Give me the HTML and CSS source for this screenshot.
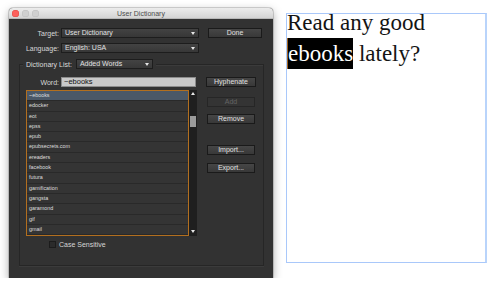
FILE: index.html
```html
<!DOCTYPE html>
<html lang="en">
<head>
    <meta charset="UTF-8">
    <meta name="viewport" content="width=device-width, initial-scale=1.0">
    <title>User Dictionary</title>
    <link rel="stylesheet" href="styles.css">
</head>
<body>
    <div class="window">
        <div class="titlebar">
            <div class="lights">
                <span class="light red"></span>
                <span class="light"></span>
                <span class="light"></span>
            </div>
            <div class="title">User Dictionary</div>
        </div>
        <div class="win-body">
            <div class="row">
                <label class="lbl">Target:</label>
                <div class="dropdown wide">User Dictionary<span class="arrow"></span></div>
                <button class="btn done">Done</button>
            </div>
            <div class="row lang-row">
                <label class="lbl">Language:</label>
                <div class="dropdown wide">English: USA<span class="arrow"></span></div>
            </div>

            <div class="group">
                <div class="legend">
                    <span class="legend-text">Dictionary List:</span>
                    <div class="dropdown short">Added Words<span class="arrow"></span></div>
                </div>

                <div class="row word-row">
                    <label class="lbl word-lbl">Word:</label>
                    <div class="word-input">~ebooks</div>
                    <button class="btn hyph">Hyphenate</button>
                </div>

                <div class="main">
                    <div class="list-wrap">
                        <ul class="word-list" id="wordList"></ul>
                        <div class="scrollbar">
                            <span class="up"></span>
                            <span class="thumb"></span>
                            <span class="down"></span>
                        </div>
                    </div>
                    <div class="side-buttons">
                        <button class="btn add" disabled>Add</button>
                        <button class="btn remove">Remove</button>
                        <button class="btn import">Import...</button>
                        <button class="btn export">Export...</button>
                    </div>
                </div>

                <div class="check-row">
                    <span class="checkbox"></span>
                    <span class="check-text">Case Sensitive</span>
                </div>
            </div>
        </div>
    </div>

    <div class="doc">
        <p class="doc-text">Read any good <span class="sel">ebooks</span> lately?</p>
    </div>

    <script>
        const words = ['~ebooks', 'edocker', 'eot', 'epss', 'epub', 'epubsecrets.com', 'ereaders',
            'facebook', 'futura', 'gamification', 'gangsta', 'garamond', 'gif', 'gmail'];
        const list = document.getElementById('wordList');
        words.forEach((w, i) => {
            const li = document.createElement('li');
            li.textContent = w;
            if (i === 0) li.classList.add('selected');
            list.appendChild(li);
        });
    </script>
</body>
</html>
```

FILE: styles.css
```css
body {
    margin: 0;
    padding: 8px 0 0 9px;
    display: flex;
    align-items: flex-start;
    background-color: #ffffff;
    font-family: "Liberation Sans", Arial, sans-serif;
}
.window {
    width: 264px;
    height: 270px;
    background-color: #323232;
    border-radius: 4px 4px 0 0;
    box-shadow: 0 3px 10px rgba(0, 0, 0, 0.35), 0 0 0 1px rgba(0, 0, 0, 0.15);
    display: flex;
    flex-direction: column;
}
.titlebar {
    height: 11px;
    flex: none;
    background: linear-gradient(#ececec, #d4d4d4);
    border-radius: 4px 4px 0 0;
    border-bottom: 1px solid #b8b8b8;
    box-sizing: border-box;
    display: flex;
    align-items: center;
}
.lights {
    display: flex;
    gap: 3px;
    padding-left: 3px;
}
.light {
    width: 7px;
    height: 7px;
    border-radius: 50%;
    background-color: #d0d0d0;
    box-shadow: inset 0 0 0 0.5px #bdbdbd;
}
.light.red {
    background-color: #fc605c;
    box-shadow: inset 0 0 0 0.5px #de4a44;
}
.title {
    flex: 1;
    text-align: center;
    font-size: 7px;
    color: #4c4c4c;
    margin-left: -30px;
}
.win-body {
    padding-top: 9px;
    color: #dcdcdc;
    font-size: 7px;
}
.row {
    display: flex;
    align-items: center;
    height: 10px;
}
.lang-row {
    margin-top: 5px;
}
.lbl {
    width: 50px;
    text-align: right;
    margin-right: 2px;
    color: #d8d8d8;
}
.dropdown {
    height: 10px;
    box-sizing: border-box;
    background: linear-gradient(#434343, #373737);
    border: 1px solid #1d1d1d;
    padding-left: 3px;
    line-height: 8px;
    color: #e2e2e2;
    position: relative;
    white-space: nowrap;
}
.dropdown.wide {
    width: 138px;
}
.dropdown.short {
    width: 77px;
}
.arrow {
    position: absolute;
    right: 3px;
    top: 3px;
    border-left: 2px solid transparent;
    border-right: 2px solid transparent;
    border-top: 3px solid #e6e6e6;
}
.btn {
    height: 10px;
    padding: 0;
    box-sizing: border-box;
    background: linear-gradient(#464646, #383838);
    border: 1px solid #1a1a1a;
    color: #e0e0e0;
    font-family: "Liberation Sans", Arial, sans-serif;
    font-size: 7px;
    line-height: 8px;
    text-align: center;
}
.btn:disabled {
    background: #343434;
    border-color: #262626;
    color: #646464;
}
.done {
    width: 54px;
    margin-left: 9px;
}
.group {
    margin: 11px 0 0 10px;
    width: 245px;
    height: 202px;
    box-sizing: border-box;
    border: 1px solid #262626;
    box-shadow: 0 1px 0 #3b3b3b, inset 0 1px 0 #3b3b3b;
}
.legend {
    display: flex;
    align-items: center;
    width: fit-content;
    margin: -6px 0 0 3px;
    padding: 0 3px;
    background-color: #323232;
    height: 10px;
}
.legend-text {
    margin-right: 4px;
}
.word-row {
    margin-top: 8px;
}
.word-lbl {
    width: 39px;
}
.word-input {
    width: 135px;
    height: 10px;
    box-sizing: border-box;
    background-color: #c9c9c9;
    border: 1px solid #8c8c8c;
    color: #111;
    font-size: 7.5px;
    line-height: 8px;
    padding-left: 2px;
}
.hyph {
    width: 50px;
    margin-left: 10px;
}
.main {
    display: flex;
    margin-top: 3px;
}
.list-wrap {
    display: flex;
    margin-left: 6px;
    height: 146px;
}
.word-list {
    list-style: none;
    margin: 0;
    padding: 0;
    width: 163px;
    box-sizing: border-box;
    border: 1px solid #b26f1f;
    background-color: #343434;
    overflow: hidden;
}
.word-list li {
    height: 10.3px;
    box-sizing: border-box;
    border-bottom: 1px solid #292929;
    font-size: 5.4px;
    line-height: 9px;
    padding-left: 2px;
    color: #dedede;
}
.word-list li.selected {
    background-color: #4b5867;
}
.scrollbar {
    width: 8px;
    background-color: #1f1f1f;
    display: flex;
    flex-direction: column;
    align-items: center;
}
.up {
    margin-top: 2px;
    border-left: 2px solid transparent;
    border-right: 2px solid transparent;
    border-bottom: 3px solid #e8e8e8;
}
.thumb {
    margin-top: 21px;
    width: 6px;
    height: 11px;
    background-color: #9b9b9b;
}
.down {
    margin-top: auto;
    margin-bottom: 3px;
    border-left: 2px solid transparent;
    border-right: 2px solid transparent;
    border-top: 3px solid #e8e8e8;
}
.side-buttons {
    display: flex;
    flex-direction: column;
    margin-left: 10px;
}
.side-buttons .btn {
    width: 48px;
}
.add {
    margin-top: 7px;
}
.remove {
    margin-top: 7px;
}
.import {
    margin-top: 21px;
}
.export {
    margin-top: 8px;
}
.check-row {
    display: flex;
    align-items: center;
    margin: 4px 0 0 29px;
    height: 8px;
}
.checkbox {
    width: 7px;
    height: 7px;
    box-sizing: border-box;
    background-color: #2b2b2b;
    border: 1px solid #1c1c1c;
    margin-right: 3px;
}
.check-text {
    font-size: 7px;
    color: #d6d6d6;
}
.doc {
    margin: 5px 0 0 13px;
    width: 201px;
    height: 250px;
    box-sizing: border-box;
    border: 1px solid #a9c8fa;
    border-right: 2px solid #b9d4fb;
}
.doc-text {
    margin: -7px 0 0 0;
    font-family: "Liberation Serif", "Times New Roman", serif;
    font-size: 23px;
    line-height: 31px;
    color: #141414;
}
.sel {
    display: inline-block;
    background-color: #000;
    color: #fff;
    height: 31px;
    border-left: 1px solid #a0621e;
}
```
